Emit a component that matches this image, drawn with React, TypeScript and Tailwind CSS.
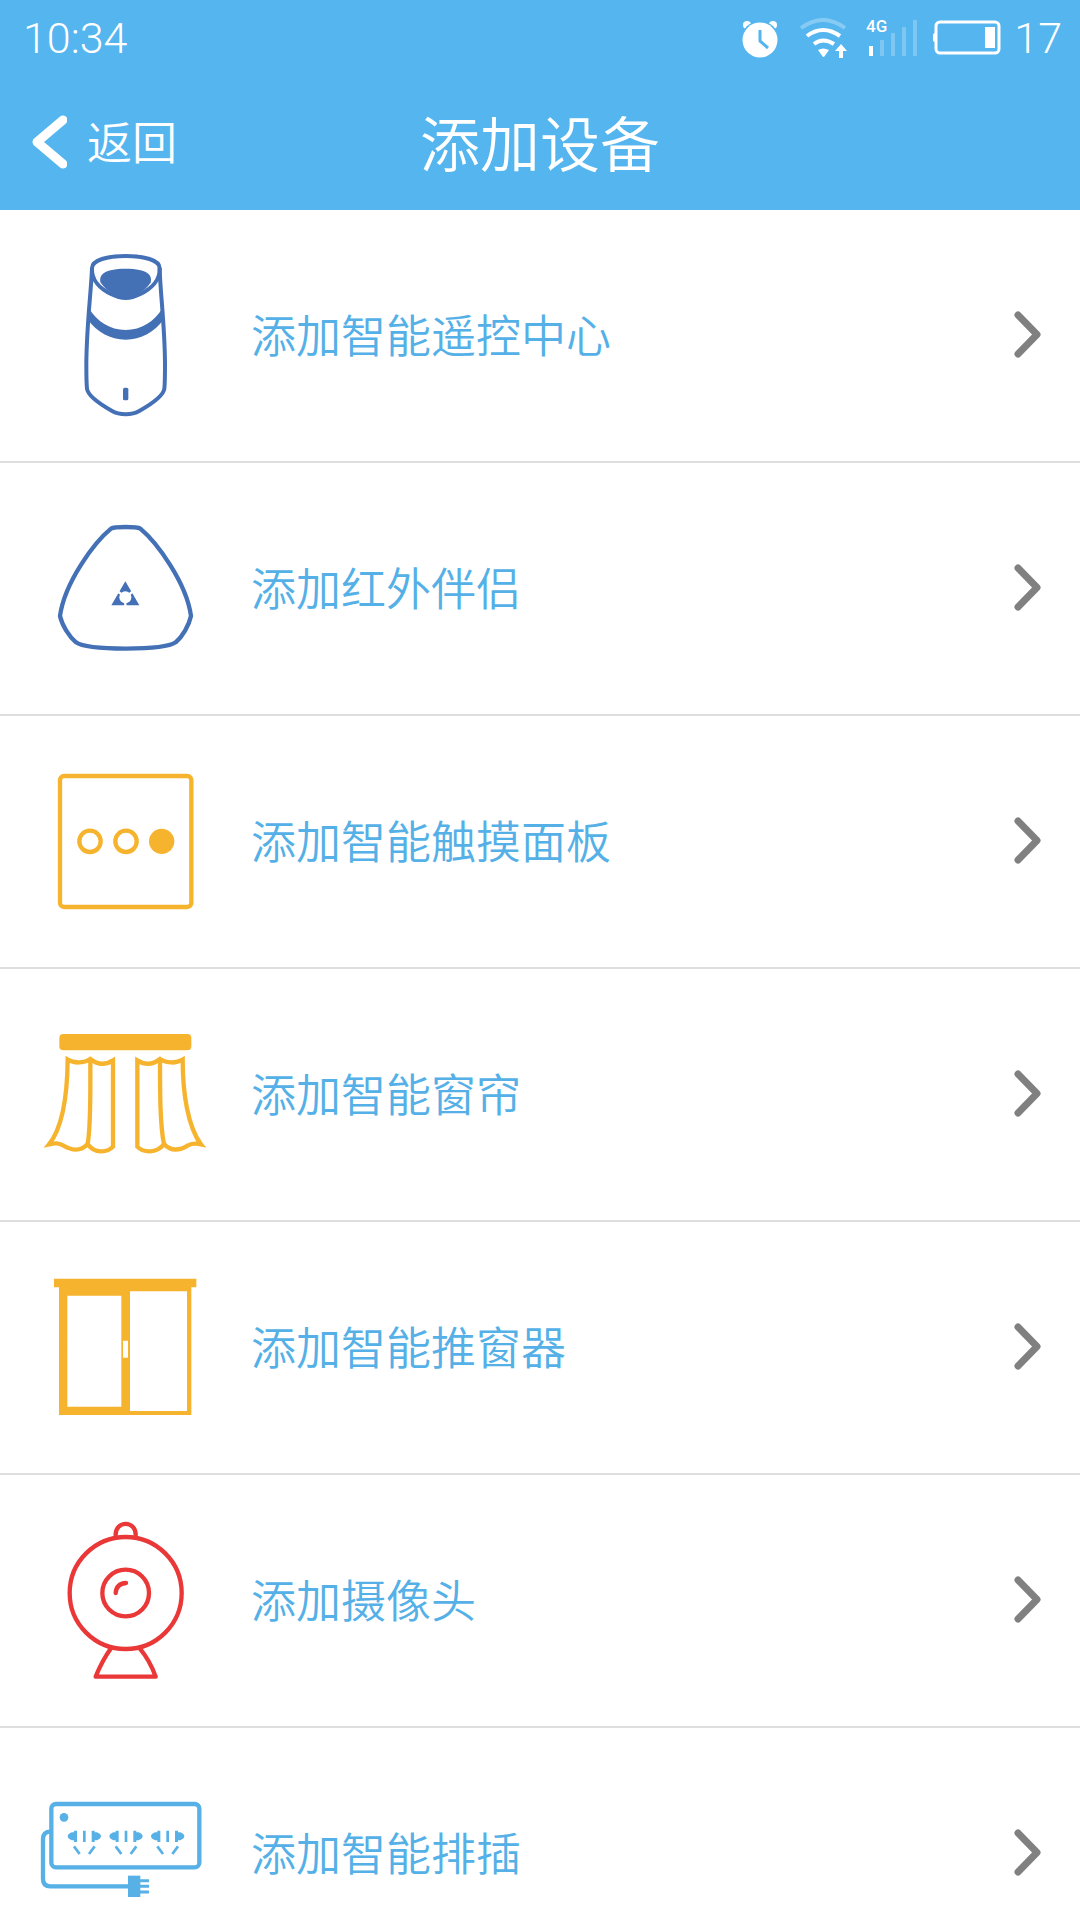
import type { ReactNode } from "react";

const BLUE = "#4470b6";
const YELLOW = "#f6b42e";
const RED = "#ea3838";
const SKY = "#57b1e6";

function RemoteIcon() {
  return (
    <svg viewBox="-12 -15 600 603" className="h-[201px] w-[200px]" fill="none" stroke={BLUE} strokeWidth="12">
      <path d="M186 84C187 60 232 48 287 48s101 12 102 36c2 38-28 64-58 78-16 8-32 12-44 12s-28-4-44-12c-30-14-59-40-57-78z" />
      <path d="M186 84C184 150 170 250 169 370c0 36 0 60 2 76 3 22 46 50 74 66 24 14 60 14 84 0 28-16 71-44 74-66 2-16 2-40 2-76C404 250 390 150 389 84" />
      <path d="M212 128c-6-22 8-42 75-42s81 20 75 42c-10 14-22 24-38 33-16 9-28 16-37 16s-21-7-37-16c-16-9-28-19-38-33z" fill={BLUE} stroke="none" />
      <path d="M178 207c22 36 62 63 109 63s87-27 109-63l3 34c-24 34-66 58-112 58s-88-24-112-58z" fill={BLUE} stroke="none" />
      <rect x="279" y="443" width="16" height="38" rx="5" fill={BLUE} stroke="none" />
    </svg>
  );
}

function InfraredIcon() {
  return (
    <svg viewBox="-12 -36 600 603" className="h-[201px] w-[200px]" fill="none" stroke={BLUE} strokeWidth="13">
      <path d="M243 86Q251 81 287 81t44 5c48 40 138 160 152 262-6 28-26 62-46 79-20 14-90 19-150 19s-130-5-149-19c-20-17-42-51-48-79C104 246 194 126 243 86z" />
      <path d="M286 244l42 72h-84z" fill={BLUE} stroke="none" />
      <path d="M286 292L258 270M286 292L314 270M286 292V320" stroke="#fff" strokeWidth="7" />
      <circle cx="286" cy="292" r="18" fill="#fff" stroke="none" />
    </svg>
  );
}

function PanelIcon() {
  return (
    <svg viewBox="-12 -27 600 603" className="h-[201px] w-[200px]" fill="none" stroke={YELLOW} strokeWidth="13">
      <rect x="90" y="78" width="394" height="393" rx="12" />
      <circle cx="180" cy="274" r="32" />
      <circle cx="288" cy="274" r="32" />
      <circle cx="395" cy="274" r="38" fill={YELLOW} stroke="none" />
    </svg>
  );
}

function CurtainIcon() {
  return (
    <svg viewBox="-12 -48 600 603" className="h-[201px] w-[200px]" fill="none" stroke={YELLOW} strokeWidth="13">
      <rect x="88" y="72" width="396" height="49" rx="12" fill={YELLOW} stroke="none" />
      <path d="M113 149c18 11 48 12 68-2 22 18 46 18 68 4v259c-16 18-56 22-76-8-24 26-50 18-74 4-14-7-22-7-42-3C98 352 112 250 113 149z" />
      <path d="M181 147c0 100 2 200-8 255" />
      <path d="M458 149c-18 11-48 12-68-2-22 18-46 18-68 4v259c16 18 58 22 80-8 24 26 50 18 72 4 14-7 22-7 39-3C474 352 458 250 458 149z" />
      <path d="M390 147c0 100 0 200 12 255" />
    </svg>
  );
}

function WindowIcon() {
  return (
    <svg viewBox="-12 -39 600 603" className="h-[201px] w-[200px]" fill={YELLOW}>
      <path fillRule="evenodd" d="M72 56h427v26h-15v383H87V82H72zM112 107v333h162V107zM300 94v359h171V94zM279 242v51h15v-51z" />
    </svg>
  );
}

function CameraIcon() {
  return (
    <svg viewBox="-12 -30 600 603" className="h-[201px] w-[200px]" fill="none" stroke={RED} strokeWidth="13" strokeLinecap="round" strokeLinejoin="round">
      <circle cx="287" cy="249" r="168" />
      <circle cx="287" cy="249" r="70" />
      <path d="M257 76c-2-46 62-46 60 0M257 249q2-28 31-30" />
      <path d="M243 415q-26 36-46 85h180q-18-50-48-85" />
    </svg>
  );
}

function Socket({ x }: { x: number }) {
  return (
    <g transform={`translate(${x} 0)`}>
      <path d="M-22 152v34h-9v-5h-7q-12-5-12-12t12-12h7v-5zM22 152v34h9v-5h7q12-5 12-12t-12-12h-7v-5z" fill={SKY} stroke="none" />
      <path d="M0 152v34M-31 199l17 23M31 199l-17 23" strokeWidth="8" />
    </g>
  );
}

function PowerStripIcon() {
  return (
    <svg viewBox="-12 -81 600 603" className="h-[201px] w-[200px]" fill="none" stroke={SKY} strokeWidth="13">
      <rect x="64" y="72" width="444" height="190" rx="14" />
      <circle cx="102" cy="112" r="13" fill={SKY} stroke="none" />
      <Socket x={163} />
      <Socket x={288} />
      <Socket x={413} />
      <path d="M62 155q-23 0-23 22v120q0 22 22 22h235" />
      <rect x="294" y="287" width="37" height="64" fill={SKY} stroke="none" />
      <path d="M330 302h27M330 319h27M330 336h27" strokeWidth="9" />
    </svg>
  );
}

function StatusBar() {
  return (
    <div className="flex h-[76px] items-center pr-[18px] pl-[23px] font-['Roboto',sans-serif] text-[43px] leading-[48px] font-light">
      <span className="mr-auto">10:34</span>
      <svg viewBox="0 0 36 40" className="h-10 w-9" fill="#fff">
        <circle cx="5" cy="7" r="4" />
        <circle cx="31" cy="7" r="4" />
        <circle cx="18" cy="22" r="19" fill="#54b5ef" />
        <circle cx="18" cy="22" r="17.5" />
        <path d="M18 12v11l8 7" fill="none" stroke="#54b5ef" strokeWidth="3" />
      </svg>
      <svg viewBox="0 0 50 40" className="ml-5 h-10 w-[50px]" fill="none" stroke="#fff" strokeWidth="4">
        <path d="M3 10q22-16 44 0" opacity=".3" />
        <path d="M9 18q16-12 33 0M16 26q9-7 20 0" />
        <path d="M20 32q5-3 11 0l-5 7h-1z" fill="#fff" stroke="none" />
        <path d="M43 26l6 7h-4v7h-4v-7h-4z" fill="#fff" stroke="none" />
      </svg>
      <svg viewBox="0 -6 52 52" className="ml-[18px] h-[52px] w-[52px]" fill="#fff">
        <text x="0" y="14" fontSize="17" fontWeight="500">4G</text>
        <rect x="3" y="28" width="4" height="10" />
        <path d="M14 22h4v16h-4zM25 15h4v23h-4zM36 9h4v29h-4zM47 2h4v36h-4z" opacity=".25" />
      </svg>
      <svg viewBox="0 0 68 40" className="ml-[15px] h-10 w-[68px]">
        <rect x="3" y="4" width="63" height="31" rx="4" fill="none" stroke="#fff" strokeWidth="3" />
        <path d="M0 17q0-2 3-2v9q-3 0-3-2zM52 9h10v21H52z" fill="#fff" />
      </svg>
      <span className="ml-[13px]">17</span>
    </div>
  );
}

const devices: { name: string; icon: ReactNode }[] = [
  { name: "添加智能遥控中心", icon: <RemoteIcon /> },
  { name: "添加红外伴侣", icon: <InfraredIcon /> },
  { name: "添加智能触摸面板", icon: <PanelIcon /> },
  { name: "添加智能窗帘", icon: <CurtainIcon /> },
  { name: "添加智能推窗器", icon: <WindowIcon /> },
  { name: "添加摄像头", icon: <CameraIcon /> },
  { name: "添加智能排插", icon: <PowerStripIcon /> },
];

export default function App() {
  return (
    <div className="flex h-screen flex-col overflow-hidden bg-white font-['Noto_Sans_CJK_SC',sans-serif] font-[350]">
      <header className="shrink-0 bg-[#54b5ef] text-white">
        <StatusBar />
        <div className="grid h-[134px] grid-cols-[1fr_auto_1fr] items-center pb-1">
          <button type="button" className="flex items-center gap-5 justify-self-start pl-[31px] text-[45px] leading-[60px]">
            <svg viewBox="0 0 36 56" className="h-14 w-9" fill="none" stroke="#fff" strokeWidth="9" strokeLinecap="round" strokeLinejoin="round">
              <path d="M32 7L6 29l26 22" />
            </svg>
            返回
          </button>
          <h1 className="text-[60px] leading-[78px]">添加设备</h1>
        </div>
      </header>

      <ul className="min-h-0 flex-1 overflow-y-auto [scrollbar-width:none]">
        {devices.map((device) => (
          <li key={device.name} className="border-b-2 border-[#dedede]">
            <a href="#" className="flex h-[251px] items-center pr-[38px] pl-[26px] text-[45px] leading-[60px] text-[#54b0e6]">
              {device.icon}
              <span className="ml-[25px] flex-1 pb-[3px]">{device.name}</span>
              <svg viewBox="0 0 28 51" className="h-[51px] w-7" fill="none" stroke="#808080" strokeWidth="7" strokeLinecap="round" strokeLinejoin="round">
                <path d="M4 5l19 19.500L4 44" />
              </svg>
            </a>
          </li>
        ))}
      </ul>
    </div>
  );
}
